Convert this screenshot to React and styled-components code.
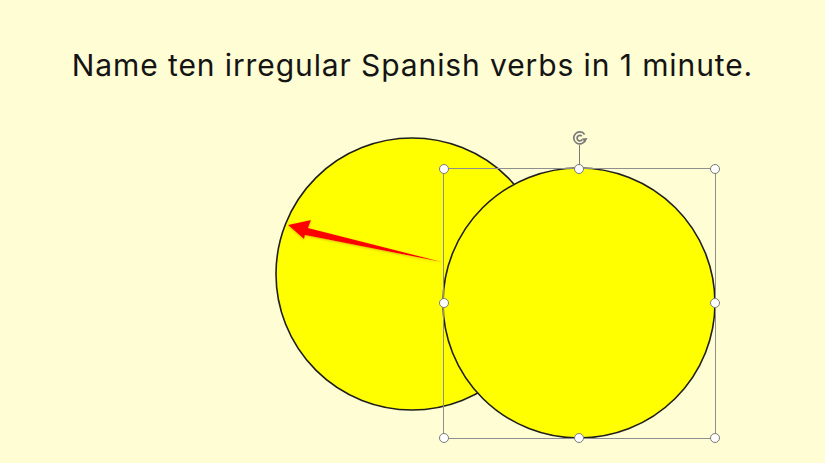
import React from "react";
import styled, { createGlobalStyle } from "styled-components";

const GlobalStyle = createGlobalStyle`
  html, body {
    margin: 0;
    padding: 0;
    background: #fffdd3;
  }
`;

const Slide = styled.div`
  width: 825px;
  height: 463px;
  background: #fffdd3;
  display: flex;
  flex-direction: column;
  overflow: hidden;
`;

const Title = styled.h1`
  margin: 0;
  padding-top: 48px;
  font-family: Inter, "Liberation Sans", sans-serif;
  font-size: 30px;
  letter-spacing: 0.9px;
  line-height: 34px;
  font-weight: 400;
  color: #141414;
  text-align: center;
`;

const Canvas = styled.div`
  position: relative;
  flex: 1 1 auto;
`;

const Shapes = styled.svg`
  display: block;
`;

const Frame = styled.div`
  position: absolute;
  left: ${({ x }) => x}px;
  top: ${({ y }) => y}px;
  width: ${({ w }) => w}px;
  height: ${({ h }) => h}px;
  border: 1px solid #8e8e8e;
  box-sizing: border-box;
`;

const Handle = styled.span`
  position: absolute;
  left: ${({ px }) => px}%;
  top: ${({ py }) => py}%;
  width: 8px;
  height: 8px;
  margin: -5.5px 0 0 -5.5px;
  border: 1.2px solid #7a7a7a;
  border-radius: 50%;
  background: #ffffff;
`;

const RotateStem = styled.span`
  position: absolute;
  left: 50%;
  top: -24px;
  width: 1px;
  height: 24px;
  margin-left: -1px;
  background: #7a7a7a;
`;

const RotateIcon = styled.svg`
  position: absolute;
  left: 50%;
  top: -40px;
  margin-left: -9px;
`;

const HANDLES = [
  [0, 0], [50, 0], [100, 0],
  [0, 50], [100, 50],
  [0, 100], [50, 100], [100, 100],
];

const TOP = 82;

const App = () => (
  <>
    <GlobalStyle />
    <Slide>
      <Title>Name ten irregular Spanish verbs in 1 minute.</Title>
      <Canvas>
        <Shapes width="825" height="381" viewBox={`0 ${TOP} 825 381`}>
          <defs>
            <filter id="glow" x="-10%" y="-50%" width="120%" height="200%">
              <feDropShadow dx="0" dy="1" stdDeviation="1.2" floodColor="#b08000" floodOpacity="0.45" />
            </filter>
          </defs>
          <circle cx="412" cy="274" r="136" fill="#ffff00" stroke="#1e1e1e" strokeWidth="1.6" />
          <polygon
            points="288,225 311,220 308,228 442,262 305,235 304,239"
            fill="#ff0000"
            filter="url(#glow)"
          />
          <ellipse cx="579" cy="303" rx="136" ry="135" fill="#ffff00" stroke="#1e1e1e" strokeWidth="1.6" />
        </Shapes>
        <Frame x={443} y={168 - TOP} w={273} h={271}>
          <RotateStem />
          <RotateIcon width="18" height="18" viewBox="0 0 18 18">
            <path
              d="M13.6 5.4 A6 6 0 1 0 14.2 11.4"
              fill="none"
              stroke="#7a7a7a"
              strokeWidth="1.7"
            />
            <path
              d="M10.8 7 A2.8 2.8 0 1 0 11.4 10.4"
              fill="none"
              stroke="#7a7a7a"
              strokeWidth="1.7"
            />
            <path d="M11 9.4 L16.6 9 L14 13.6 Z" fill="#7a7a7a" />
          </RotateIcon>
          {HANDLES.map(([px, py]) => (
            <Handle key={`${px}-${py}`} px={px} py={py} />
          ))}
        </Frame>
      </Canvas>
    </Slide>
  </>
);

export default App;
